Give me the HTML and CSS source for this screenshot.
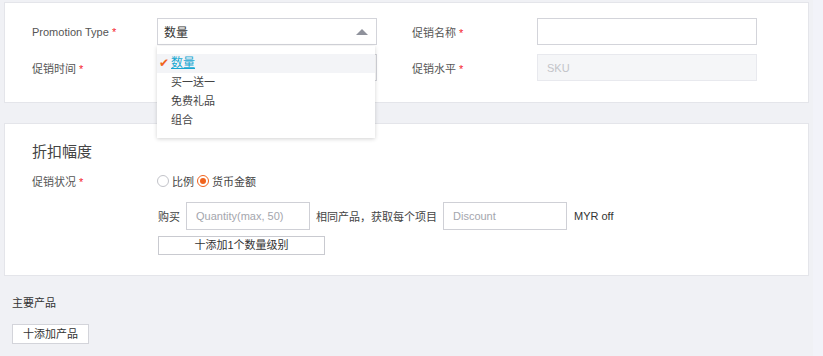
FILE: index.html
```html
<!DOCTYPE html>
<html>
<head>
<meta charset="utf-8">
<link rel="stylesheet" href="styles.css">
</head>
<body>
<div class="page">
  <section class="card card-basic">
    <div class="grid">
      <div class="field">
        <label class="label">Promotion Type <span class="req">*</span></label>
        <div class="select-wrap">
          <div class="select open">
            <span>数量</span>
            <span class="caret"></span>
          </div>
          <ul class="menu">
            <li class="menu-item active"><span class="check">✔</span><span class="u">数量</span></li>
            <li class="menu-item">买一送一</li>
            <li class="menu-item">免费礼品</li>
            <li class="menu-item">组合</li>
          </ul>
        </div>
      </div>
      <div class="field">
        <label class="label">促销名称 <span class="req">*</span></label>
        <div class="input"></div>
      </div>
      <div class="field">
        <label class="label">促销时间 <span class="req">*</span></label>
        <div class="input"></div>
      </div>
      <div class="field">
        <label class="label">促销水平 <span class="req">*</span></label>
        <div class="input disabled">SKU</div>
      </div>
    </div>
  </section>

  <section class="card card-discount">
    <h2 class="title">折扣幅度</h2>
    <div class="field status">
      <label class="label">促销状况 <span class="req">*</span></label>
      <div class="radios">
        <span class="radio"></span><span class="radio-text">比例</span>
        <span class="radio checked"></span><span class="radio-text">货币金额</span>
      </div>
    </div>
    <div class="rule">
      <span class="txt">购买</span>
      <div class="small-input">Quantity(max, 50)</div>
      <span class="txt">相同产品，获取每个项目</span>
      <div class="small-input">Discount</div>
      <span class="txt myr">MYR off</span>
    </div>
    <div class="add-level"><button class="btn btn-level">十添加1个数量级别</button></div>
  </section>

  <section class="products">
    <div class="products-title">主要产品</div>
    <button class="btn btn-add">十添加产品</button>
  </section>
</div>
</body>
</html>
```

FILE: styles.css
```css
* { box-sizing: border-box; }
html, body { margin: 0; padding: 0; }
body {
  background: #f2f3f9;
  font-family: "Liberation Sans", Arial, "Noto Sans CJK SC", sans-serif;
  font-size: 11px;
  color: #333;
  width: 823px;
  height: 356px;
  overflow: hidden;
}
.page {
  width: 813px;
  height: 356px;
  background: #f0f1f5;
  padding: 2px 4px 0;
}
.card {
  background: #fff;
  border: 1px solid #e4e5ea;
}
.card-basic {
  height: 101px;
  padding: 15px 0 0 27px;
}
.grid {
  display: grid;
  grid-template-columns: 380px 380px;
  row-gap: 9px;
}
.field {
  display: flex;
  align-items: center;
  height: 27px;
}
.label {
  width: 125px;
  color: #555;
  font-size: 11px;
  flex: none;
}
.req { color: #f5222d; }
.input, .select {
  width: 220px;
  height: 27px;
  border: 1px solid #d3d4da;
  background: #fff;
  padding: 0 6px;
  display: flex;
  align-items: center;
}
.input.disabled {
  background: #f5f6f8;
  border-color: #e8e9ee;
  color: #c3c4c8;
  padding-left: 9px;
}
.select-wrap { position: relative; }
.select { justify-content: space-between; color: #333; font-size: 12px; padding-right: 8px; }
.caret {
  width: 0; height: 0;
  border-left: 6px solid transparent;
  border-right: 6px solid transparent;
  border-bottom: 6px solid #8f929c;
}
.menu {
  position: absolute;
  left: 0;
  top: 28px;
  width: 218px;
  height: 92px;
  margin: 0;
  padding: 8px 0 0;
  list-style: none;
  background: #fff;
  box-shadow: 0 1px 4px rgba(0,0,0,0.18);
  z-index: 5;
}
.menu-item {
  height: 19px;
  line-height: 19px;
  padding-left: 14px;
  color: #444;
  font-size: 11px;
}
.menu-item.active {
  background: #f3f4f7;
  padding-left: 2px;
  color: #17a8d2;
  font-size: 12px;
}
.check { color: #f0641e; font-size: 12px; display: inline-block; width: 12px; }
.u { text-decoration: underline; }

.card-discount {
  margin-top: 20px;
  height: 153px;
  padding: 17px 0 0 27px;
}
.title {
  margin: 0;
  font-weight: normal;
  font-size: 15px;
  color: #444;
  height: 22px;
  line-height: 22px;
}
.status { height: 18px; margin-top: 9px; }
.radios { display: flex; align-items: center; margin-left: 0; }
.radio {
  width: 12px; height: 12px;
  border: 1px solid #c2c3c9;
  border-radius: 50%;
  margin-right: 3px;
  position: relative;
}
.radio.checked { border-color: #f0641e; margin-left: 3px; }
.radio.checked::after {
  content: "";
  position: absolute;
  left: 2px; top: 2px;
  width: 6px; height: 6px;
  border-radius: 50%;
  background: #f0641e;
}
.radio-text { color: #444; font-size: 11px; }
.rule {
  display: flex;
  align-items: center;
  margin-top: 12px;
  padding-left: 126px;
  height: 28px;
}
.txt { color: #444; font-size: 11px; }
.small-input {
  width: 124px;
  height: 28px;
  border: 1px solid #cfd0d6;
  margin: 0 6px 0 6px;
  display: flex;
  align-items: center;
  padding-left: 9px;
  color: #a4a6ad;
  font-size: 11px;
}
.myr { color: #333; margin-left: 1px; }
.add-level { padding-left: 126px; margin-top: 6px; }
.btn {
  font-family: "Liberation Sans", Arial, "Noto Sans CJK SC", sans-serif;
  background: #fff;
  border: 1px solid #c9cad0;
  color: #333;
  font-size: 11px;
  padding: 0;
  height: 19px;
  line-height: 17px;
}
.btn-level { width: 167px; }
.products { padding: 19px 0 0 8px; }
.products-title { color: #333; font-size: 11px; height: 16px; line-height: 16px; }
.btn-add { margin-top: 13px; width: 77px; height: 20px; border-color: #d3d4da; }
```
